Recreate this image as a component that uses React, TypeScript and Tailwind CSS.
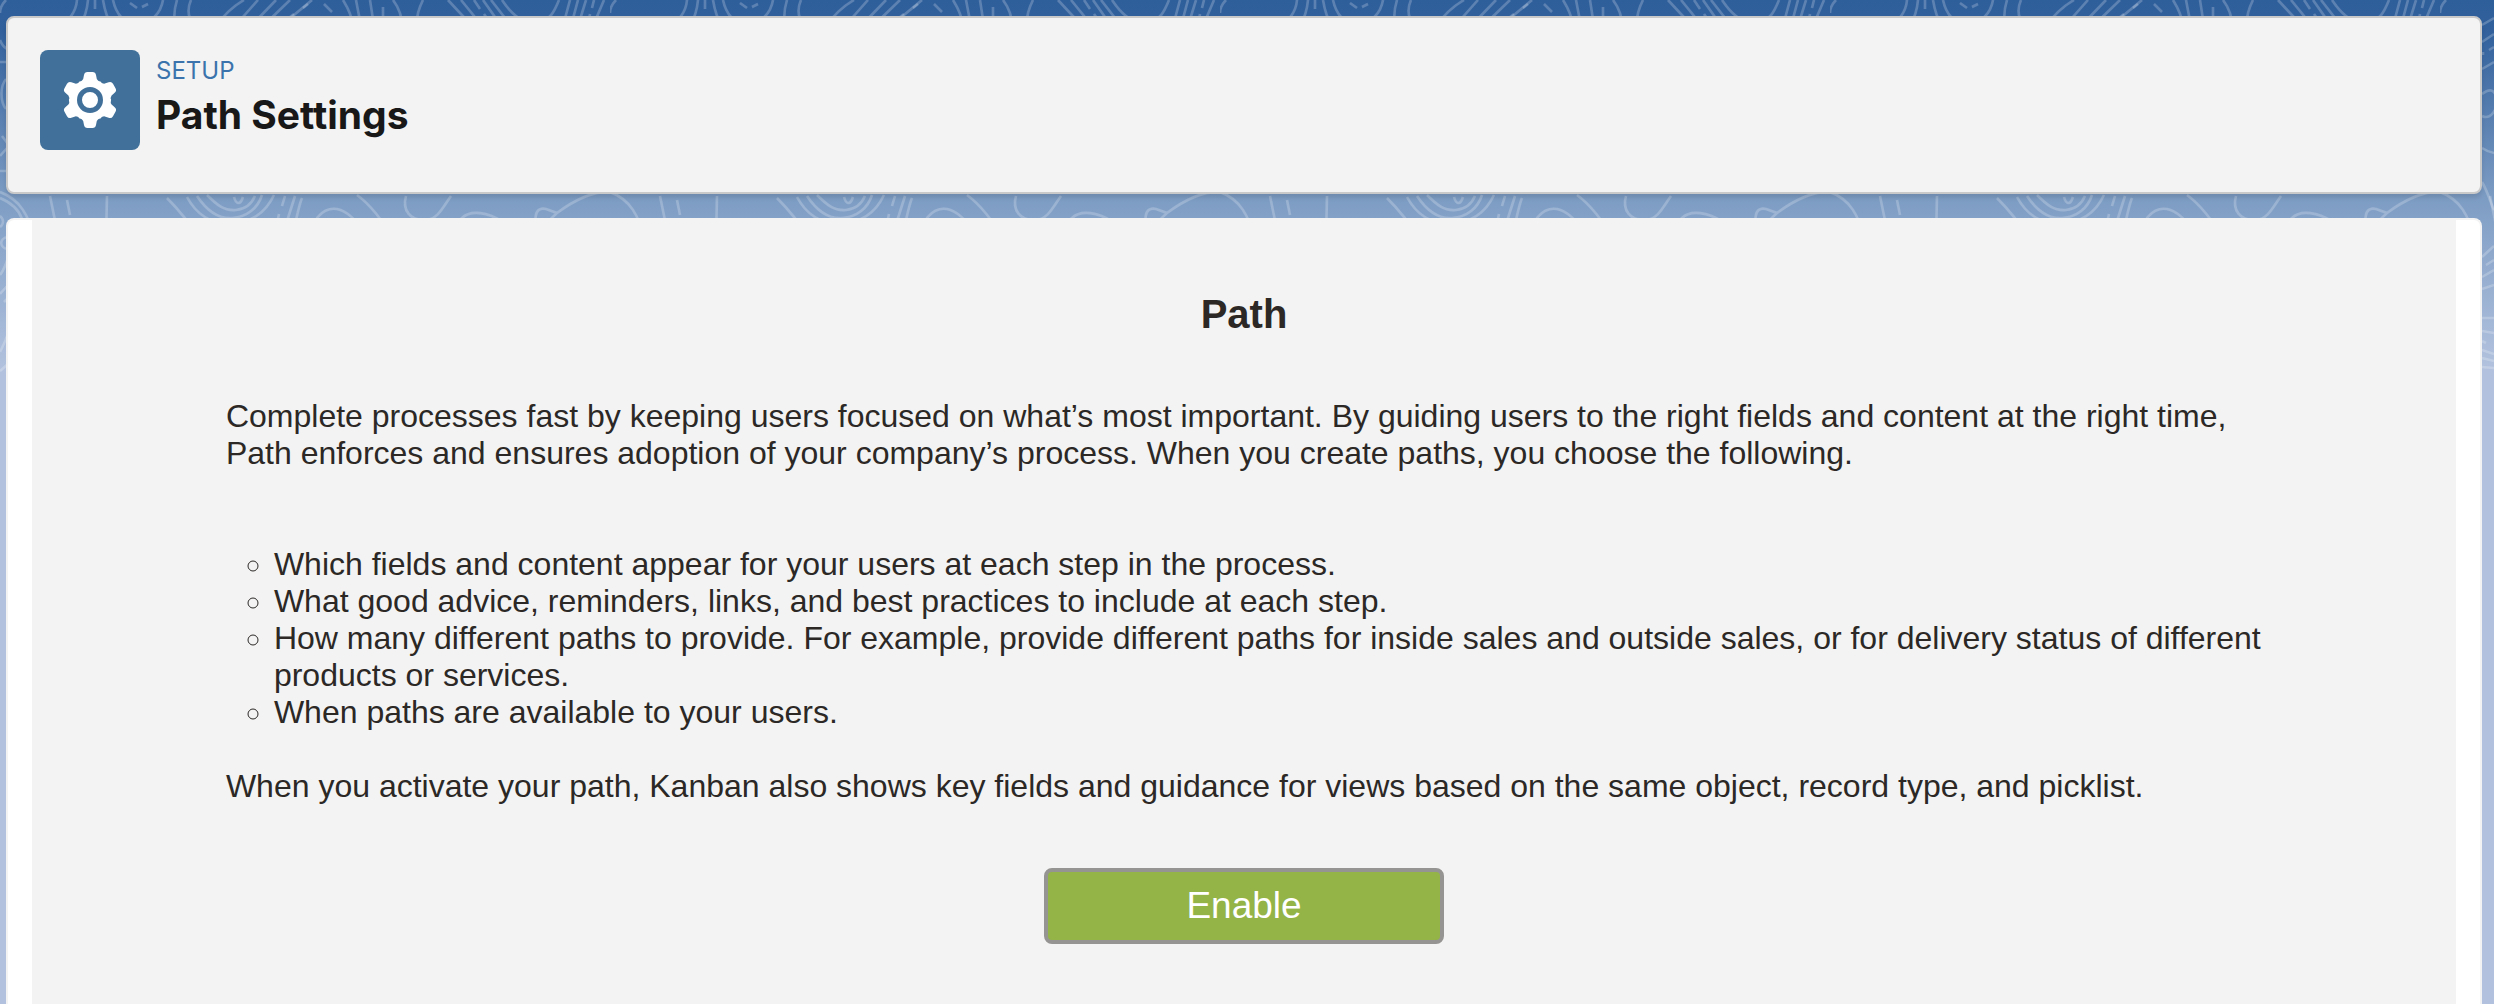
function ContourBackground() {
  return (
    <svg aria-hidden="true" className="absolute inset-0 h-full w-full">
      <defs>
        <pattern id="contours" width="610" height="420" patternUnits="userSpaceOnUse">
          <g fill="none" stroke="#ffffff" strokeOpacity="0.22" strokeWidth="2.6">
            <path d="M6 0C2 4 0 8 0 13" />
            <path d="M77 0C76 13 68 22 58 26M88 0C87 12 84 19 80 26" />
            <path d="M95 0V9M95 16V26" />
            <path d="M103 0C105 12 108 20 112 26M113 0C116 14 124 24 137 24C152 24 161 12 163 0" />
            <path d="M130 3L137 8M142 7L148 4" />
            <path d="M177 0C174 10 173 18 176 26M191 0C187 9 188 18 194 26" />
            <path d="M244 0C232 7 224 15 217 25M258 0L234 27M276 0L250 27M290 0L262 27M312 0L276 30" />
            <path d="M308 4L303 8M294 14L286 20M324 4L332 12M331 18L335 26" />
            <path d="M343 0C348 8 352 16 353 26M356 0L361 26M370 0L374 26M383 7V17M393 0C399 8 402 16 402 26M423 0C418 10 416 17 417 26" />
            <path d="M448 0L473 27M461 0L483 27M474 0L480 9M484 14L493 27M483 0L502 27M491 0L512 27M502 0C510 12 520 23 536 23C550 22 555 10 559 0" />
            <path d="M570 0L563 26M578 0L571 26M586 0L578 26M594 0L592 8M590 14L588 26M604 0L593 26" />
            <path d="M50 196L59 240M107 196L106 240M167 198C176 207 188 221 201 240" />
            <path d="M67 200L70 215M71 222L76 235" />
            <path d="M187 197C194 210 207 224 230 223C252 223 266 212 274 195M197 196C207 211 219 219 232 218C247 217 258 208 262 195M207 195C217 205 224 211 236 210C246 209 252 203 255 196M234 197C236 204 240 206 243 197" />
            <path d="M285 196L282 206M279 214L275 232M295 196L281 240M302 198C298 208 296 220 292 240" />
            <path d="M307 240C314 216 324 207 337 209C352 212 361 229 374 242M357 195C372 206 382 221 395 240" />
            <path d="M406 196C402 210 410 221 426 220C438 219 443 207 451 196" />
            <path d="M418 242C435 237 450 228 462 218C471 209 489 213 501 221C510 228 514 235 515 242" />
            <path d="M542 238C532 221 534 206 546 209L557 213C548 220 544 229 540 239M557 213C576 199 594 191 610 192" />
            <path d="M553 242C569 222 591 217 606 224C617 229 622 236 625 242" />
            <path d="M0 192C20 199 29 216 35 240" />
          </g>
        </pattern>
      </defs>
      <rect width="100%" height="420" fill="url(#contours)" />
      <g fill="none" stroke="#ffffff" strokeOpacity="0.22" strokeWidth="2.6">
        <path d="M0 40C2 45 4 48 8 49M0 62H8M6 79C0 86 0 102 6 109M2 136L8 144M0 156L8 147M0 171H8" />
        <path d="M0 198C12 203 19 210 22 219M0 216C4 219 4 224 0 227M8 237C-1 238 -1 248 8 249M0 275C4 270 6 264 8 258M0 294L8 285M4 302L8 298M0 352C4 344 6 340 8 333M0 371L8 364" />
      </g>
      <svg x="100%" overflow="visible">
        <g fill="none" stroke="#ffffff" strokeOpacity="0.22" strokeWidth="2.6">
          <path d="M-12 25L0 18M-12 42L0 34M-11 55V52M-5 50L0 47M-12 69L0 62M-12 94C-4 88 0 90 2 96M-12 116C-4 120 0 112 2 108M-12 148Q-6 152 0 153" />
          <path d="M-12 182C-5 194 -3 205 0 210M-12 257L0 246M-8 265L0 260M-12 277L0 270M-12 289L0 285M-12 318H0M-12 331L0 333M-12 341L-8 343M-12 350L0 354M-12 358L0 361M-12 367L0 368" />
        </g>
      </svg>
    </svg>
  );
}

function SetupIcon() {
  return (
    <div className="flex size-[100px] shrink-0 items-center justify-center rounded-lg bg-[#41719a]">
      <svg viewBox="0 0 100 100" className="size-full" aria-hidden="true">
        <g fill="#ffffff">
          <circle cx="50" cy="50" r="20" />
          {[0, 60, 120, 180, 240, 300].map((angle) => (
            <path
              key={angle}
              transform={`rotate(${angle} 50 50)`}
              d="M47.500 22H52.500Q55.500 22 56 25L56.800 29Q57.500 31 61 32V40H39V32Q42.500 31 43.200 29L44 25Q44.500 22 47.500 22Z"
            />
          ))}
        </g>
        <circle cx="50" cy="50" r="10.500" fill="#ffffff" stroke="#41719a" strokeWidth="5" />
      </svg>
    </div>
  );
}

const choices = [
  "Which fields and content appear for your users at each step in the process.",
  "What good advice, reminders, links, and best practices to include at each step.",
  "How many different paths to provide. For example, provide different paths for inside sales and outside sales, or for delivery status of different products or services.",
  "When paths are available to your users.",
];

export default function App() {
  return (
    <div className="relative isolate flex min-h-screen flex-col gap-6 bg-[#b2c2de] bg-[linear-gradient(to_bottom,#2f5f9b_0px,#31609c_30px,#7e9dc4_200px,#b2c2de_370px)] pt-4 pr-3 pl-[6px]">
      <div className="absolute inset-0 -z-10 overflow-hidden">
        <ContourBackground />
      </div>
      <header className="flex min-h-[178px] items-start gap-4 rounded-lg border-2 border-[#c9c9c9] bg-[#f3f3f3] px-8 py-8 font-['Inter',sans-serif] shadow-[0_4px_4px_rgba(0,0,0,0.1)]">
        <SetupIcon />
        <div className="pt-1">
          <p className="text-2xl leading-[34px] text-[#3b73ac]">SETUP</p>
          <h1 className="text-[39px] leading-[54px] font-bold text-[#181818]">Path Settings</h1>
        </div>
      </header>
      <main className="flex grow flex-col rounded-t-lg border-2 border-b-0 border-[#f3f3f3] bg-white px-6 font-['Liberation_Sans',Arial,sans-serif]">
        <section className="grow bg-[#f3f3f3] px-[8%] pt-[70px] text-[32px] leading-[37px] text-[#2b2826]">
          <h2 className="text-center text-[40px] leading-[48px] font-bold">Path</h2>
          <p className="mt-[60px]">
            Complete processes fast by keeping users focused on what’s most important. By guiding users to the right
            fields and content at the right time, Path enforces and ensures adoption of your company’s process. When
            you create paths, you choose the following.
          </p>
          <ul className="mt-[74px] list-[circle] pl-12">
            {choices.map((choice) => (
              <li key={choice}>{choice}</li>
            ))}
          </ul>
          <p className="mt-[37px]">
            When you activate your path, Kanban also shows key fields and guidance for views based on the same object,
            record type, and picklist.
          </p>
          <div className="mt-[63px] flex justify-center pb-16">
            <button
              type="button"
              className="h-[76px] w-[400px] rounded-lg border-4 border-[#969492] bg-[#94b447] text-[37px] leading-[44px] text-white"
            >
              Enable
            </button>
          </div>
        </section>
      </main>
    </div>
  );
}
